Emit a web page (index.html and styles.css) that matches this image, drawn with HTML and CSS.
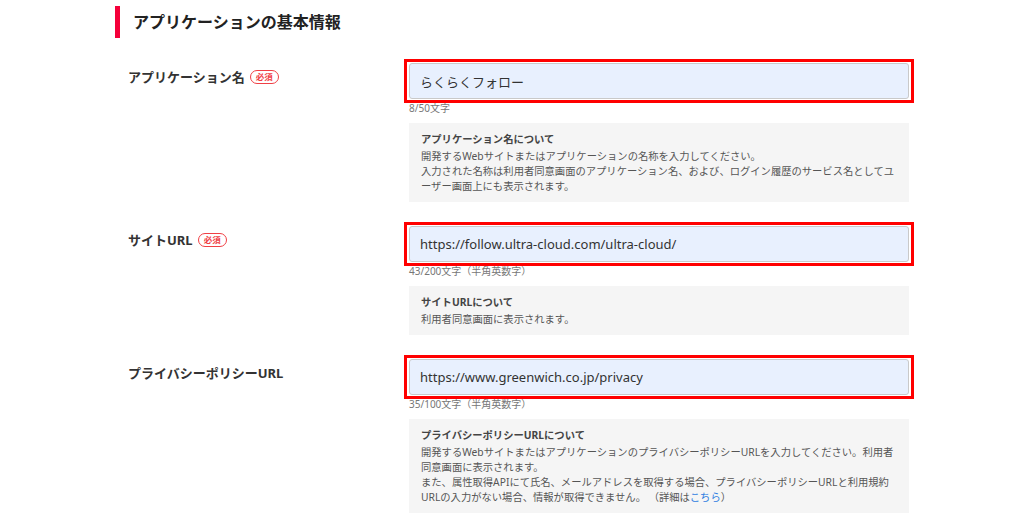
FILE: index.html
```html
<!DOCTYPE html>
<html lang="ja">
<head>
  <meta charset="UTF-8">
  <meta name="viewport" content="width=device-width, initial-scale=1.0">
  <title>アプリケーションの基本情報</title>
  <link rel="stylesheet" href="styles.css">
</head>
<body>
  <div class="page">
    <h2 class="section-title">アプリケーションの基本情報</h2>

    <div class="form">
      <div class="row">
        <div class="label">アプリケーション名<span class="required">必須</span></div>
        <div class="field">
          <div class="marked">
            <input type="text" class="text-input" value="らくらくフォロー">
          </div>
          <p class="count">8/50文字</p>
          <div class="note">
            <p class="note-title">アプリケーション名について</p>
            <p class="note-text">開発するWebサイトまたはアプリケーションの名称を入力してください。<br>入力された名称は利用者同意画面のアプリケーション名、および、ログイン履歴のサービス名としてユーザー画面上にも表示されます。</p>
          </div>
        </div>
      </div>

      <div class="row">
        <div class="label">サイトURL<span class="required">必須</span></div>
        <div class="field">
          <div class="marked">
            <input type="text" class="text-input" value="https://follow.ultra-cloud.com/ultra-cloud/">
          </div>
          <p class="count">43/200文字（半角英数字）</p>
          <div class="note">
            <p class="note-title">サイトURLについて</p>
            <p class="note-text">利用者同意画面に表示されます。</p>
          </div>
        </div>
      </div>

      <div class="row">
        <div class="label">プライバシーポリシーURL</div>
        <div class="field">
          <div class="marked">
            <input type="text" class="text-input" value="https://www.greenwich.co.jp/privacy">
          </div>
          <p class="count">35/100文字（半角英数字）</p>
          <div class="note">
            <p class="note-title">プライバシーポリシーURLについて</p>
            <p class="note-text">開発するWebサイトまたはアプリケーションのプライバシーポリシーURLを入力してください。利用者同意画面に表示されます。<br>また、属性取得APIにて氏名、メールアドレスを取得する場合、プライバシーポリシーURLと利用規約URLの入力がない場合、情報が取得できません。 （詳細は<a href="#">こちら</a>）</p>
          </div>
        </div>
      </div>
    </div>
  </div>
</body>
</html>
```

FILE: styles.css
```css
body {
  margin: 0;
  font-family: "Noto Sans", "Noto Sans CJK JP", sans-serif;
  color: #333;
  background-color: #fff;
}

.page {
  padding: 6px 0 0 115px;
}

.section-title {
  margin: 0;
  height: 32px;
  padding-left: 13px;
  border-left: 5px solid #f5003a;
  font-size: 16px;
  font-weight: bold;
  line-height: 32px;
  color: #222;
}

.form {
  display: flex;
  flex-direction: column;
  gap: 24px;
  margin: 25px 0 0 13px;
}

.row {
  display: grid;
  grid-template-columns: 281px 500px;
}

.label {
  display: flex;
  align-items: center;
  align-self: start;
  padding-top: 4px;
  font-size: 13px;
  font-weight: bold;
  line-height: 20px;
  color: #333;
}

.required {
  margin-left: 5px;
  padding: 0 5px;
  border: 1px solid #f04045;
  border-radius: 8px;
  font-size: 8.5px;
  font-weight: bold;
  line-height: 12px;
  color: #f04045;
}

/* red annotation frame around the filled fields */
.marked {
  margin: -4px -5px;
  padding: 1px 2px;
  border: 3px solid #f00;
}

.text-input {
  display: block;
  width: 100%;
  height: 36px;
  box-sizing: border-box;
  padding: 0 10px;
  border: 1px solid #c9c9c9;
  border-radius: 3px;
  background-color: #e8f0fe;
  font-family: "Noto Sans", "Noto Sans CJK JP", sans-serif;
  font-size: 13px;
  color: #333;
}

.count {
  margin: 2px 0 0;
  font-size: 10px;
  line-height: 14px;
  color: #777;
}

.note {
  margin-top: 8px;
  padding: 8px 12px;
  background-color: #f5f5f5;
}

.note-title {
  margin: 0;
  font-size: 10.3px;
  font-weight: bold;
  line-height: 16px;
  color: #444;
}

.note-text {
  margin: 2px 0 0;
  font-size: 10.3px;
  line-height: 15px;
  color: #555;
  line-break: loose;
}

.note-text a {
  color: #2f7de1;
  text-decoration: none;
}
```
